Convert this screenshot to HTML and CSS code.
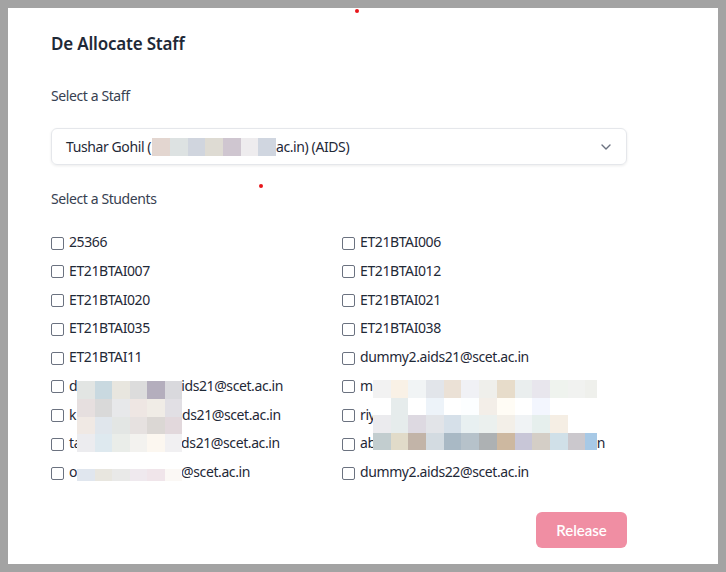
FILE: index.html
```html
<!DOCTYPE html>
<html>
<head>
<meta charset="utf-8">
<link rel="stylesheet" href="styles.css">
</head>
<body>
<div class="modal">
  <span class="dot dot-top"></span>
  <span class="dot dot-mid"></span>
  <div class="content">
    <h2 class="title">De Allocate Staff</h2>
    <div class="label label-staff">Select a Staff</div>
    <div class="select">
      <span class="select-text">Tushar Gohil (<span class="mosaic mosaic-inline"><i style="background:#e3d6d0"></i><i style="background:#dde2e2"></i><i style="background:#d0d5de"></i><i style="background:#dedbd3"></i><i style="background:#cfc6d0"></i><i style="background:#eeecee"></i><i style="background:#d0d6e0"></i></span>ac.in) (AIDS)</span>
      <svg class="chevron" width="10" height="6" viewBox="0 0 10 6"><path d="M1 1l4 4 4-4" fill="none" stroke="#6b7280" stroke-width="1.4" stroke-linecap="round" stroke-linejoin="round"/></svg>
    </div>
    <div class="label label-students">Select a Students</div>
    <div class="grid">
      <label class="item"><span class="box"></span><span>25366</span></label>
      <label class="item"><span class="box"></span><span>ET21BTAI006</span></label>
      <label class="item"><span class="box"></span><span>ET21BTAI007</span></label>
      <label class="item"><span class="box"></span><span>ET21BTAI012</span></label>
      <label class="item"><span class="box"></span><span>ET21BTAI020</span></label>
      <label class="item"><span class="box"></span><span>ET21BTAI021</span></label>
      <label class="item"><span class="box"></span><span>ET21BTAI035</span></label>
      <label class="item"><span class="box"></span><span>ET21BTAI038</span></label>
      <label class="item"><span class="box"></span><span>ET21BTAI11</span></label>
      <label class="item"><span class="box"></span><span>dummy2.aids21@scet.ac.in</span></label>
      <label class="item"><span class="box"></span><span>d<span class="hid hid-a"></span>ids21@scet.ac.in</span></label>
      <label class="item"><span class="box"></span><span>m<span class="hid hid-r"></span></span></label>
      <label class="item"><span class="box"></span><span>k<span class="hid hid-b"></span>ds21@scet.ac.in</span></label>
      <label class="item"><span class="box"></span><span>riy<span class="hid hid-r"></span></span></label>
      <label class="item"><span class="box"></span><span>ta<span class="hid hid-c"></span>ds21@scet.ac.in</span></label>
      <label class="item"><span class="box"></span><span>ab<span class="hid hid-n"></span>n</span></label>
      <label class="item"><span class="box"></span><span>o<span class="hid hid-d"></span>@scet.ac.in</span></label>
      <label class="item"><span class="box"></span><span>dummy2.aids22@scet.ac.in</span></label>

      <div class="mosaic mosaic-left">
        <i style="background:#e2e5e3"></i><i style="background:#c9d9e0"></i><i style="background:#e8e6df"></i><i style="background:#dcdcdc"></i><i style="background:#b4aebd"></i><i style="background:#d9d9dd"></i>
        <i style="background:#e6dfdf"></i><i style="background:#d9d9d9"></i><i style="background:#e7e8ea"></i><i style="background:#eee6e3"></i><i style="background:#f0ece6"></i><i style="background:#e1dfe4"></i>
        <i style="background:#f0e9e4"></i><i style="background:#e0e6ec"></i><i style="background:#e3e6e4"></i><i style="background:#e6e1e0"></i><i style="background:#dbd7d4"></i><i style="background:#e2d8dc"></i>
        <i style="background:#ececef"></i><i style="background:#dee9ef"></i><i style="background:#eaede9"></i><i style="background:#f3f2ef"></i><i style="background:#fcf7f0"></i><i style="background:#f1f0f2"></i>
      </div>
      <div class="mosaic mosaic-left-low">
        <i style="background:#e0e6ee"></i><i style="background:#e8e6df"></i><i style="background:#e9e9e8"></i><i style="background:#efe9ee"></i><i style="background:#f0e5ea"></i><i style="background:#fbf8f5"></i>
      </div>
      <div class="mosaic mosaic-right">
        <i style="background:#f2f2f2"></i><i style="background:#f9f1e6"></i><i style="background:#f1f4f5"></i><i style="background:#e2e5ea"></i><i style="background:#ebe1d6"></i><i style="background:#f0f1f5"></i><i style="background:#efefeb"></i><i style="background:#e7dcca"></i><i style="background:#eaeeee"></i><i style="background:#e8e6ed"></i><i style="background:#eff3ee"></i><i style="background:#f1f2f0"></i><i style="background:#eff0ec"></i>
        <i style="background:#ffffff"></i><i style="background:#e6ecec"></i><i style="background:#ffffff"></i><i style="background:#edf3f9"></i><i style="background:#ffffff"></i><i style="background:#fcfeff"></i><i style="background:#f3eee8"></i><i style="background:#fffcf5"></i><i style="background:#ffffff"></i><i style="background:#f3f6fe"></i><i style="background:#ffffff"></i><i style="background:#ffffff"></i><i style="background:#ffffff"></i>
        <i style="background:#ebebee"></i><i style="background:#e6ecec"></i><i style="background:#ddd9e1"></i><i style="background:#e2e4e8"></i><i style="background:#d6e0e9"></i><i style="background:#e8f0f1"></i><i style="background:#ebf0ee"></i><i style="background:#f3efe8"></i><i style="background:#f0f3f5"></i><i style="background:#e6efed"></i><i style="background:#f5eee4"></i><i style="background:#ffffff"></i><i style="background:#ffffff"></i>
        <i style="background:#c2cdcf"></i><i style="background:#e1dbc9"></i><i style="background:#c2b4a8"></i><i style="background:#d3dbe1"></i><i style="background:#a9b9c5"></i><i style="background:#b6c2ca"></i><i style="background:#adb1b3"></i><i style="background:#cdb8a0"></i><i style="background:#c8c6d7"></i><i style="background:#d4cec6"></i><i style="background:#d0e0e8"></i><i style="background:#cbc8cd"></i><i style="background:#a7c9e6"></i>
      </div>
    </div>
    <div class="actions">
      <button class="release" type="button">Release</button>
    </div>
  </div>
</div>
</body>
</html>
```
FILE: styles.css
```css
html {
  background: #a3a3a3;
}
body {
  margin: 8px;
  font-family: "Noto Sans", "Open Sans", sans-serif;
  color: #1f2937;
}
.modal {
  position: relative;
  height: 556px;
  background: #ffffff;
  box-sizing: border-box;
  padding: 24px 0 0 43px;
}
.dot {
  position: absolute;
  width: 4px;
  height: 4px;
  border-radius: 50%;
  background: #e8161b;
}
.dot-top { left: 347px; top: 1px; }
.dot-mid { left: 251px; top: 176px; }
.content {
  width: 576px;
}
.title {
  margin: 0;
  font-size: 17px;
  line-height: 24px;
  font-weight: 600;
  color: #1f2937;
  letter-spacing: -0.2px;
}
.label {
  font-size: 14px;
  line-height: 20px;
  color: #374151;
  letter-spacing: -0.4px;
}
.label-staff { margin-top: 30px; }
.label-students { margin-top: 24px; }
.select {
  margin-top: 22px;
  height: 37px;
  box-sizing: border-box;
  border: 1px solid #e5e7eb;
  border-radius: 6px;
  box-shadow: 0 1px 3px rgba(0, 0, 0, 0.08);
  display: flex;
  align-items: center;
  justify-content: space-between;
  padding: 0 15px 0 14px;
}
.select-text {
  font-size: 14px;
  line-height: 20px;
  letter-spacing: -0.4px;
  color: #1f2937;
  display: flex;
  align-items: center;
  white-space: nowrap;
}
.chevron {
  display: block;
}
.mosaic {
  display: grid;
}
.mosaic i {
  display: block;
}
.mosaic-inline {
  grid-template-columns: repeat(7, 17.7px);
  grid-template-rows: 18px;
  margin-left: 1px;
}
.grid {
  position: relative;
  margin-top: 23px;
  display: grid;
  grid-template-columns: 291px 1fr;
  grid-auto-rows: 20px;
  row-gap: 8.75px;
}
.item {
  display: flex;
  align-items: center;
  gap: 5px;
  font-size: 14px;
  line-height: 20px;
  letter-spacing: -0.4px;
  color: #1f2937;
  white-space: nowrap;
}
.box {
  width: 13px;
  height: 13px;
  box-sizing: border-box;
  border: 1px solid #6b7280;
  border-radius: 2px;
  flex: none;
  margin-top: 2px;
}
.hid {
  display: inline-block;
  height: 1px;
}
.hid-a { width: 104px; }
.hid-b { width: 106px; }
.hid-c { width: 100px; }
.hid-d { width: 104px; }
.hid-r { width: 200px; }
.hid-n { width: 221px; }
.mosaic-left {
  position: absolute;
  left: 26px;
  top: 149px;
  grid-template-columns: repeat(6, 17.5px);
  grid-auto-rows: 17.75px;
}
.mosaic-left-low {
  position: absolute;
  left: 26px;
  top: 237px;
  grid-template-columns: repeat(6, 17.5px);
  grid-auto-rows: 12px;
}
.mosaic-right {
  position: absolute;
  left: 322px;
  top: 148px;
  grid-template-columns: repeat(12, 17.7px) 11.7px;
  grid-auto-rows: 17.6px;
}
.actions {
  margin-top: 30px;
  display: flex;
  justify-content: flex-end;
}
.release {
  width: 91px;
  height: 36px;
  border: none;
  border-radius: 6px;
  background: #f08ea3;
  color: #ffffff;
  font-family: Lato, "Noto Sans", sans-serif;
  font-size: 15px;
  font-weight: 600;
  padding: 0;
}
```
